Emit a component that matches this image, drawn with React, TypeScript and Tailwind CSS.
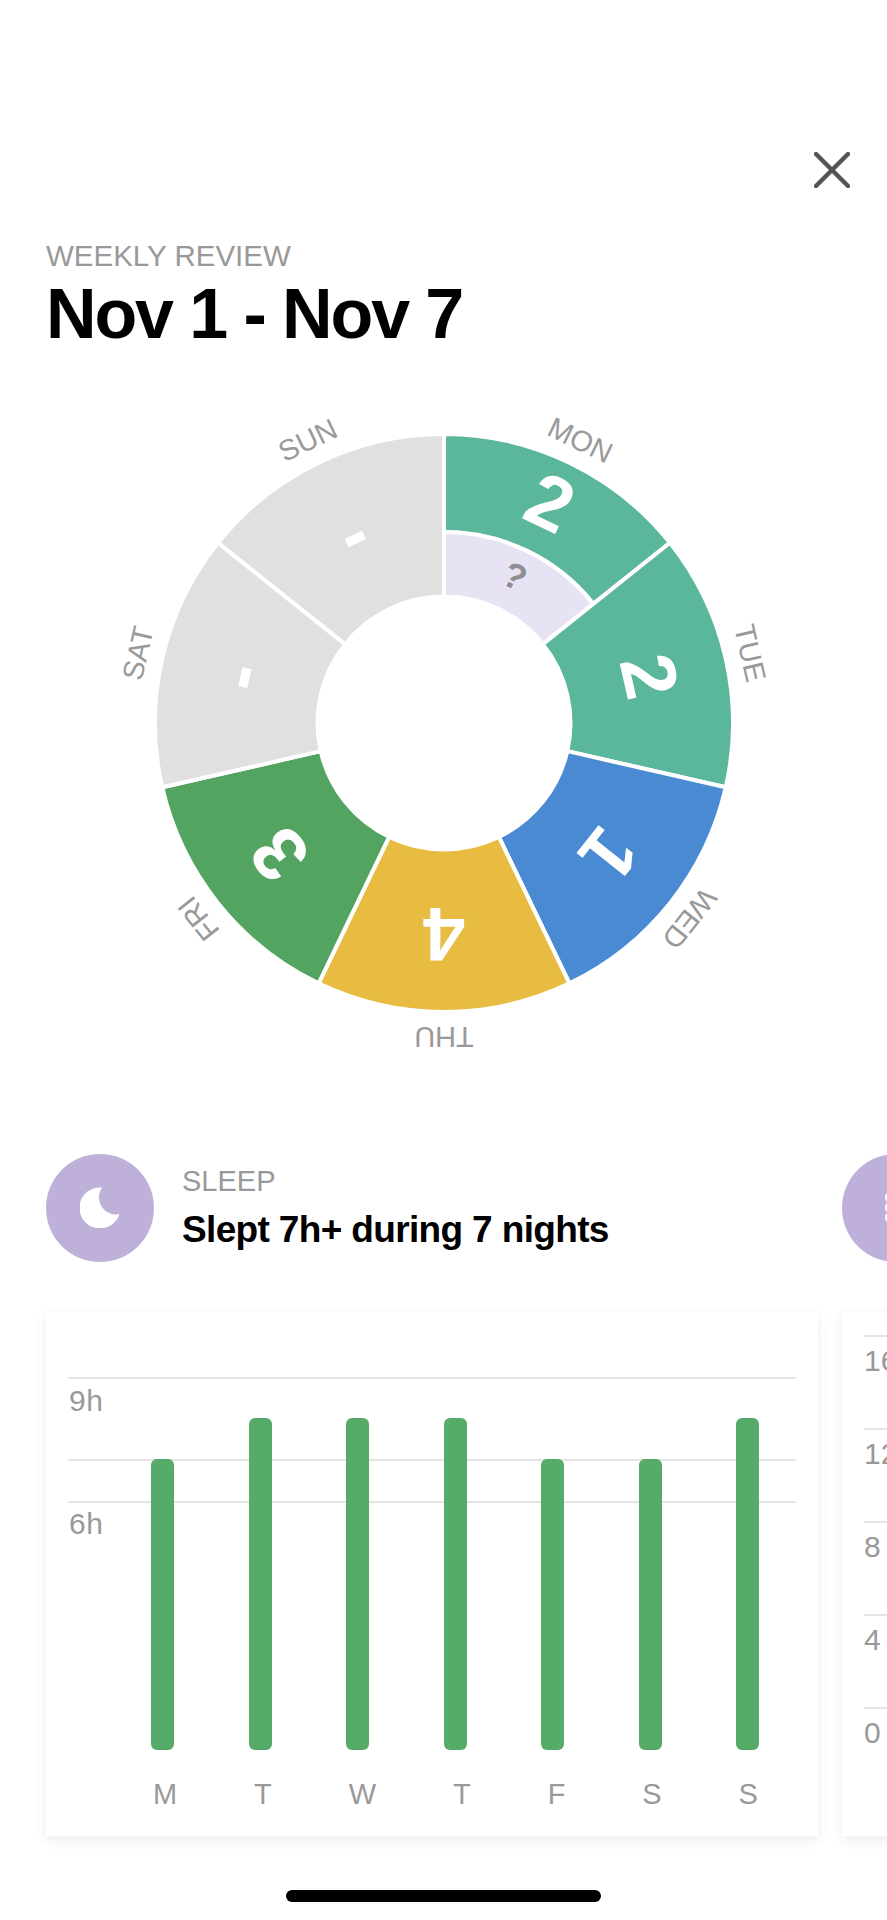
const CX = 290;
const CY = 290;
const R = 289;
const MID = 191;
const INNER = 126.5;
const STEP = (2 * Math.PI) / 7;

const days = [
  { label: "MON", value: "2", color: "#5AB79C" },
  { label: "TUE", value: "2", color: "#5AB79C" },
  { label: "WED", value: "1", color: "#4A8AD2" },
  { label: "THU", value: "4", color: "#E7BC40" },
  { label: "FRI", value: "3", color: "#53A461" },
  { label: "SAT", value: "-", color: "#E0E0E0" },
  { label: "SUN", value: "-", color: "#E0E0E0" },
];

const sleep = [
  { day: "M", tall: false },
  { day: "T", tall: true },
  { day: "W", tall: true },
  { day: "T", tall: true },
  { day: "F", tall: false },
  { day: "S", tall: false },
  { day: "S", tall: true },
];

const pt = (r: number, a: number) =>
  `${(CX + r * Math.sin(a)).toFixed(2)} ${(CY - r * Math.cos(a)).toFixed(2)}`;

const slice = (r0: number, r1: number, a0: number, a1: number) =>
  `M${pt(r0, a0)} L${pt(r1, a0)} A${r1} ${r1} 0 0 1 ${pt(r1, a1)} L${pt(r0, a1)} A${r0} ${r0} 0 0 0 ${pt(r0, a0)} Z`;

const at = (r: number, a: number) => {
  const deg = (a * 180) / Math.PI;
  const x = CX + r * Math.sin(a);
  const y = CY - r * Math.cos(a);
  return `rotate(${deg.toFixed(2)} ${x.toFixed(2)} ${y.toFixed(2)})`;
};

const Wheel = () => (
  <svg width="640" height="640" viewBox="-30 -30 640 640" className="block overflow-visible">
    {days.map((d, i) => {
      const a0 = i * STEP;
      const a1 = (i + 1) * STEP;
      const mid = a0 + STEP / 2;
      const xl = CX + 314 * Math.sin(mid);
      const yl = CY - 314 * Math.cos(mid);
      const rv = i === 0 ? 245 : 211;
      const xv = CX + rv * Math.sin(mid);
      const yv = CY - rv * Math.cos(mid);
      return (
        <g key={d.label}>
          <path
            d={i === 0 ? slice(MID, R, a0, a1) : slice(INNER, R, a0, a1)}
            fill={d.color}
            stroke="#fff"
            strokeWidth="4"
          />
          {i === 0 && (
            <>
              <path d={slice(INNER, MID, a0, a1)} fill="#E7E3F4" stroke="#fff" strokeWidth="4" />
              <text
                x={CX + 163 * Math.sin(mid)}
                y={CY - 163 * Math.cos(mid)}
                transform={at(163, mid)}
                textAnchor="middle"
                dominantBaseline="central"
                fill="#8E8E93"
                fontSize="36"
                fontWeight="700"
              >
                ?
              </text>
            </>
          )}
          <text
            x={xv}
            y={yv}
            transform={at(rv, mid)}
            textAnchor="middle"
            dominantBaseline="central"
            fill="#fff"
            fontSize="76"
            fontWeight="700"
          >
            {d.value}
          </text>
          <text
            x={xl}
            y={yl}
            transform={at(314, mid)}
            textAnchor="middle"
            dominantBaseline="central"
            fill="#999"
            fontSize="29"
          >
            {d.label}
          </text>
        </g>
      );
    })}
  </svg>
);

const Moon = () => (
  <svg width="40" height="41" viewBox="0 0 40 41">
    <path d="M22 0.5 A20.5 20.5 0 1 0 39.5 27 A17 17 0 0 1 22 0.5 Z" fill="#fff" />
  </svg>
);

const Line = ({ className = "" }: { className?: string }) => (
  <div className={`h-[2px] bg-[#E4E4E4] ${className}`} />
);

const SleepChart = () => (
  <div className="grid h-[524px] w-[772px] shrink-0 bg-white px-[22px] pt-[65px] shadow-[0_4px_12px_rgba(0,0,0,0.08)]">
    <div className="col-start-1 row-start-1 text-[30px] leading-[34px] tracking-[0.5px] text-[#999]">
      <Line />
      <div className="mt-[5px] h-[75px] pl-[1px]">9h</div>
      <Line />
      <Line className="mt-[40px]" />
      <div className="mt-[4px] pl-[1px]">6h</div>
    </div>
    <div className="col-start-1 row-start-1 flex h-[373px] items-end justify-between pl-[83px] pr-[37px]">
      {sleep.map((s, i) => (
        <div
          key={i}
          className={`w-[23px] rounded-[6px] bg-[#56AB68] ${s.tall ? "h-[332px]" : "h-[291px]"}`}
        />
      ))}
    </div>
    <div className="col-start-1 row-start-1 mt-[400px] flex h-[34px] justify-between pl-[85px] pr-[38px] text-[29px] leading-[34px] text-[#999]">
      {sleep.map((s, i) => (
        <span key={i}>{s.day}</span>
      ))}
    </div>
  </div>
);

const StepsChart = () => (
  <div className="h-[524px] w-[772px] shrink-0 bg-white pl-[22px] pt-[23px] shadow-[0_4px_12px_rgba(0,0,0,0.08)]">
    {["16", "12", "8", "4", "0"].map((n) => (
      <div key={n} className="h-[93px] text-[30px] leading-[34px] text-[#999]">
        <Line />
        <div className="mt-[7px]">{n}</div>
      </div>
    ))}
  </div>
);

export default function App() {
  return (
    <div
      className="flex h-[1920px] w-[887px] flex-col overflow-hidden bg-white"
      style={{ fontFamily: '"Liberation Sans", Arial, sans-serif' }}
    >
      <div className="flex justify-end pr-[37px] pt-[152px]">
        <svg width="36" height="36" viewBox="0 0 36 36" fill="none" stroke="#555" strokeWidth="4.5" strokeLinecap="round">
          <path d="M2 2 L34 34 M34 2 L2 34" />
        </svg>
      </div>

      <div className="pl-[46px] pt-[51px]">
        <p className="text-[29.5px] leading-[34px] text-[#999]">WEEKLY REVIEW</p>
        <h1 className="mt-[3px] text-[70px] font-bold leading-[76px] tracking-[-2.1px] text-black">
          Nov 1 - Nov 7
        </h1>
      </div>

      <div className="mt-[50.5px] pl-[123.5px]">
        <Wheel />
      </div>

      <div className="mt-[110.5px] flex gap-[24px] pl-[46px]">
        <div className="shrink-0">
          <div className="flex h-[109px] items-center gap-[28px]">
            <div className="flex h-[108px] w-[108px] items-center justify-center rounded-full bg-[#BFB0D9]">
              <Moon />
            </div>
            <div>
              <p className="text-[29px] leading-[34px] text-[#999]">SLEEP</p>
              <p className="mt-[10px] text-[37px] font-bold leading-[44px] tracking-[-0.65px] text-black">
                Slept 7h+ during 7 nights
              </p>
            </div>
          </div>
          <div className="mt-[50px]">
            <SleepChart />
          </div>
        </div>
        <div className="shrink-0">
          <div className="flex h-[109px] items-center">
            <div className="flex h-[108px] w-[108px] flex-col justify-center gap-[1px] rounded-full bg-[#BFB0D9] pl-[43px]">
              <div className="h-[9px] w-[12px] rounded-[4px] bg-white" />
              <div className="h-[9px] w-[12px] rounded-[4px] bg-white" />
              <div className="h-[9px] w-[12px] rounded-[4px] bg-white" />
            </div>
          </div>
          <div className="mt-[50px]">
            <StepsChart />
          </div>
        </div>
      </div>

      <div className="mt-[54px] flex justify-center">
        <div className="h-[12px] w-[315px] rounded-[6px] bg-black" />
      </div>
    </div>
  );
}
